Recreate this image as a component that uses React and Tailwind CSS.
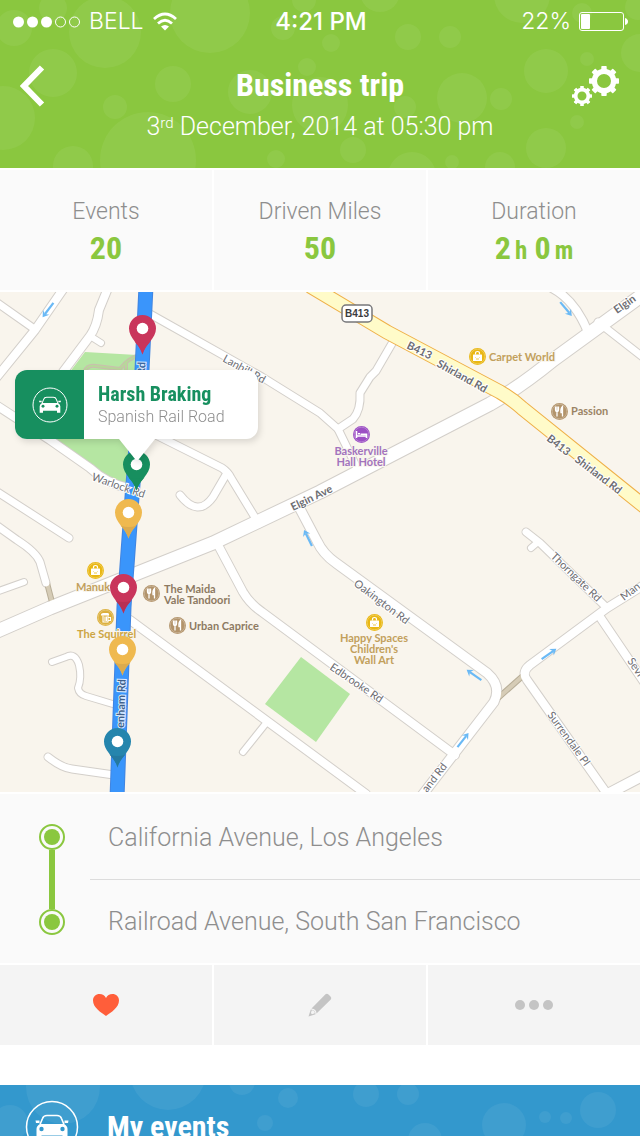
import React from 'react';

const CONDENSED = "font-['Roboto_Condensed','Liberation_Sans_Narrow','Roboto',sans-serif] font-bold";

const HEADER_BUBBLES = [
  [14, 28, 18], [53, 8, 14], [105, 32, 36], [210, 13, 40], [53, 73, 24], [3, 118, 32],
  [115, 107, 12], [173, 84, 18], [148, 160, 48], [73, 166, 20], [250, 92, 22], [276, 159, 9],
  [307, 67, 9], [283, 28, 12], [320, 105, 28], [304, 0, 12], [380, -8, 20], [408, 37, 13],
  [450, 37, 11], [331, 43, 9], [522, -5, 28], [546, 71, 22], [462, 98, 25], [501, 99, 11],
  [405, 107, 11], [353, 150, 13], [412, 176, 24], [452, 162, 7], [500, 167, 15], [546, 148, 20],
  [577, 122, 7], [587, 59, 7], [640, 53, 19], [638, 7, 13], [582, 13, 10]
];

const EVENT_BUBBLES = [
  [63, 2, 37], [168, -13, 38], [242, -3, 13], [288, 13, 10], [265, 38, 8], [10, 38, 18],
  [366, 9, 13], [408, 9, 11], [504, 40, 22], [598, 25, 18], [545, 32, 6], [566, 33, 6], [425, 55, 17]
];

// Side streets: [path, width]
const STREETS = [
  ['M64 288 L35 330 L-4 378', 8],
  ['M-4 302 L33 328', 7],
  ['M108 288 L99 310 Q97 326 90 336 L63 372', 8],
  ['M90 336 L101 343', 6],
  ['M-4 405 L50 440 L90 468 Q106 483 128 488', 8],
  ['M150 314 L262 377 L320 413 L338 429 L358 470', 7],
  ['M394 340 L376 371 L370 377 L360 393 Q361 410 353 419 L338 429', 7],
  ['M140 428 L160 437 L222 468 Q228 472 231 478 L259 524', 7],
  ['M227 473 L213 497 Q198 518 180 495', 7],
  ['M552 288 Q575 300 588 332', 8],
  ['M598 322 L644 358', 7],
  ['M-4 491 L69 538', 7],
  ['M-4 525 L17 540 Q36 552 40 562 L46 583', 7],
  ['M-4 592 L24 582', 6],
  ['M52 662 L66 657 Q75 652 79 665 Q82 678 78 688 Q79 694 86 696 L116 705', 6],
  ['M48 757 Q62 768 72 769 L114 775', 7],
  ['M130 620 L366 794', 8],
  ['M267 722 L243 752', 6],
  ['M218 545 L243 592 Q250 604 262 612 L455 755', 8],
  ['M299 507 L317 541 Q323 554 336 563 L487 673 Q502 686 494 702 L420 798', 9],
  ['M644 585 L607 608 L530 665 Q521 672 527 680 L610 798', 8],
  ['M600 617 L644 682', 8],
  ['M526 532 L540 543 L607 608', 7],
  ['M538 542 L531 548', 6],
  ['M604 796 L644 775', 10]
];

const ELGIN = 'M-5 632 L50 608 L213 543 L320 492 L490 404 Q520 387 553 360 L645 293';
const SHIRLAND = 'M310 286 L387 332 L500 392 Q512 399 522 408 L645 507';
const ROUTE = 'M146 286 L142 370 L132 497 L124 607 L117 798';

// [label, x, y, angle, weight]
const ROAD_LABELS = [
  ['Lanhill Rd', 222, 361, 29, 400],
  ['Warlock Rd', 91, 480, 19, 400],
  ['Elgin Ave', 293, 511, -26, 700],
  ['Elgin', 617, 314, -35, 700],
  ['B413', 406, 348, 26, 700],
  ['Shirland Rd', 436, 366, 29, 700],
  ['B413', 546, 440, 38, 700],
  ['Shirland Rd', 574, 461, 37, 700],
  ['Oakington Rd', 353, 585, 37, 400],
  ['Edbrooke Rd', 329, 669, 34, 400],
  ['Thorngate Rd', 550, 557, 44, 400],
  ['Surrendale Pl', 547, 715, 54, 400],
  ['Sevi', 627, 661, 56, 400],
  ['Man', 624, 601, -38, 400],
  ['and Rd', 427, 793, -52, 400]
];

const ONE_WAYS = [[53, 305, 127], [571, 304, 50], [313, 533, 244], [479, 670, 215], [468, 735, -52], [554, 649, -35]];

const PINS = [
  [142, 328, '#c9355b', '#c9355b'],
  [136, 464, '#178f5f', '#178f5f'],
  [128, 512, '#efb94f', '#dcab4e'],
  [123, 587, '#c9355b', '#b83054'],
  [122, 649, '#efb94f', '#dcab4e'],
  [117, 741, '#2585ad', '#2479a0']
];

const Bubbles = ({ items, height }) => (
  <svg
    className="absolute inset-0 w-full h-full"
    viewBox={`0 0 640 ${height}`}
    preserveAspectRatio="xMidYMin slice"
    aria-hidden="true"
  >
    {items.map(([x, y, r], idx) => (
      <circle key={idx} cx={x} cy={y} r={r} fill="#fff" fillOpacity="0.06" />
    ))}
  </svg>
);

const Gear = ({ x, y, r, hole }) => (
  <g transform={`translate(${x} ${y})`}>
    <circle r={(r * 0.82 + hole) / 2} fill="none" stroke="#fff" strokeWidth={r * 0.82 - hole} />
    {[0, 45, 90, 135, 180, 225, 270, 315].map((a) => (
      <rect key={a} x={-r * 0.18} y={-r} width={r * 0.36} height={r * 0.3} rx={r * 0.05} fill="#fff" transform={`rotate(${a})`} />
    ))}
  </g>
);

const CarBadge = ({ size, hole }) => (
  <svg width={size} height={size} viewBox="0 0 54 54" fill="none" aria-hidden="true" className="shrink-0">
    <circle cx="27" cy="27" r="25.5" stroke="#fff" strokeWidth="1.5" />
    <path d="M15 24.500 L17.500 18.500 Q18.500 15.500 22 15.500 H32 Q35.500 15.500 36.500 18.500 L39 24.500" stroke="#fff" strokeWidth="1.600" />
    <path d="M10.500 20.500 h4 v2.500 h-3.500 z M39.500 20.500 h4 l-.5 2.500 h-3.500 z" fill="#fff" />
    <path d="M15 24 H39 Q42.500 26 42.500 29 V38.500 H37.500 V35.500 H16.500 V38.500 H11.500 V29 Q11.500 26 15 24 Z" fill="#fff" />
    <circle cx="16.500" cy="29" r="2.200" fill={hole} />
    <circle cx="37.500" cy="29" r="2.200" fill={hole} />
  </svg>
);

const StatusBar = () => (
  <div className="relative grid grid-cols-3 items-center h-[43px] pl-[13px] pr-[11px] text-[23px] leading-none font-['Inter','Liberation_Sans',sans-serif]">
    <div className="flex items-center font-light">
      <svg width="68" height="14" viewBox="0 0 68 14" aria-hidden="true">
        {[5.500, 19.500, 33.500].map((x) => <circle key={x} cx={x} cy="7" r="5.500" fill="#fff" />)}
        {[47.500, 61.500].map((x) => <circle key={x} cx={x} cy="7" r="5" fill="none" stroke="#fff" />)}
      </svg>
      <span className="ml-2">BELL</span>
      <svg className="ml-2" width="26" height="20" viewBox="0 0 26 20" fill="none" stroke="#fff" strokeWidth="2.800" aria-hidden="true">
        <path d="M2 7 Q13 -3 24 7" />
        <path d="M6 11.500 Q13 5 20 11.500" />
        <path d="M9 14.500 Q13 11.500 17 14.500 L13 18.500 Z" fill="#fff" stroke="none" />
      </svg>
    </div>
    <span className="text-center text-[24px] font-medium">4:21 PM</span>
    <div className="flex items-center justify-end gap-2 font-light">
      <span>22%</span>
      <svg width="50" height="20" viewBox="0 0 50 20" aria-hidden="true">
        <rect x="0.500" y="0.500" width="44" height="18" rx="2.500" fill="none" stroke="#fff" />
        <rect x="2" y="2" width="9" height="15" rx="1" fill="#fff" />
        <path d="M46 6 Q49 7 49 9.500 Q49 12 46 13 Z" fill="#fff" />
      </svg>
    </div>
  </div>
);

const Header = () => (
  <header className="relative overflow-hidden bg-[#8ac73f] text-white h-[168px]">
    <Bubbles items={HEADER_BUBBLES} height={168} />
    <StatusBar />
    <div className="relative flex items-start justify-between px-5">
      <a href="#trips" aria-label="Back" className="w-[50px] pt-[22px]">
        <svg width="26" height="42" viewBox="0 0 26 42" fill="none" stroke="#fff" strokeWidth="6" aria-hidden="true">
          <path d="M22 2.500 L4 21 L22 39.500" />
        </svg>
      </a>
      <div className="text-center pt-[21px]">
        <h1 className={`${CONDENSED} text-[32px] leading-[42px]`}>Business trip</h1>
        <p className="text-[25px] leading-[42px] font-light">
          3<sup className="text-[15px] leading-none">rd</sup> December, 2014 at 05:30 pm
        </p>
      </div>
      <button type="button" aria-label="Settings" className="w-[50px] pt-[22px]">
        <svg width="50" height="44" viewBox="0 0 50 44" aria-hidden="true">
          <Gear x={34} y={16} r={15} hole={7} />
          <Gear x={12} y={31} r={10} hole={4.500} />
        </svg>
      </button>
    </div>
  </header>
);

const Stat = ({ label, children }) => (
  <div className="bg-[#fafafa] h-[120px] pt-[27px] text-center">
    <dt className="text-[23px] leading-[30px] font-light text-[#8e8e8e]">{label}</dt>
    <dd className={`${CONDENSED} text-[32px] leading-[42px] text-[#8ac73f]`}>{children}</dd>
  </div>
);

const PoiIcon = ({ x, y, kind }) => {
  const colors = { shop: '#e9b713', food: '#b3946b', pub: '#dcb03c', hotel: '#9c4fc4' };
  return (
    <g transform={`translate(${x + 0.5} ${y + 0.5})`}>
      <circle r="8.500" fill={colors[kind]} />
      <circle r="7.300" fill="none" stroke="#fff" strokeOpacity="0.25" />
      {kind === 'shop' && (
        <>
          <rect x="-4.500" y="-2" width="9" height="6.500" rx="0.500" fill="#fff" />
          <path d="M-2 -2 V-3 Q-2 -5 0 -5 Q2 -5 2 -3 V-2" fill="none" stroke="#fff" strokeWidth="1.200" />
          <path d="M-2 .5 V1 M2 .5 V1 M-1.500 2.500 H1.500" stroke="#e9b713" strokeWidth="0.800" />
        </>
      )}
      {kind === 'food' && (
        <path d="M-4 -5 V-2 Q-4 0 -2.500 0 Q-1 0 -1 -2 V-5 M-2.500 -5 V5 M3 5 V-5 Q1 -3 1.500 1 H3" fill="none" stroke="#fff" strokeWidth="1.300" />
      )}
      {kind === 'pub' && (
        <>
          <path d="M-4.500 -2 Q-5 -4.500 -2 -4.500 H2 Q4 -4.500 3.500 -2 Z" fill="#fff" />
          <path d="M-2.500 -2 V4.500 H2.500 V-2 M-.5 -1 V3.500 M1 -1 V3.500 M3 0 H5 V3 H3" fill="none" stroke="#fff" strokeWidth="1.100" />
        </>
      )}
      {kind === 'hotel' && (
        <path d="M-5 -3.500 V3.500 M-5 1.500 H5 V3.500 M-3.500 -.8 H-1.500 M-1 -.3 H5 V1" fill="none" stroke="#fff" strokeWidth="1.600" />
      )}
    </g>
  );
};

const PoiLabel = ({ x, y, lines, color, anchor = 'start' }) => (
  <text x={x} y={y} fill={color} textAnchor={anchor} fontSize="11" fontWeight="700" stroke="#f9f5ed" strokeWidth="2" paintOrder="stroke">
    {lines.map((line, idx) => (
      <tspan key={line} x={x} dy={idx === 0 ? 0 : 11}>{line}</tspan>
    ))}
  </text>
);

const Pin = ({ x, y, color, shade }) => (
  <g transform={`translate(${x + 0.5} ${y + 0.5})`}>
    <path d="M0 26 C-3 15 -13.500 10 -13.500 0 A13.500 13.500 0 0 1 13.500 0 C13.500 10 3 15 0 26 Z" fill={color} />
    <path d="M0 26 C-1.500 20 -5 16.500 -8 13 Q0 16 8 13 C5 16.500 1.500 20 0 26 Z" fill={shade} />
    <circle r="5.800" fill="#fff" />
  </g>
);

const TripMap = () => (
  <section className="relative overflow-hidden bg-[#f9f5ed]" aria-label="Trip map">
    <svg
      className="block w-full h-[500px] font-['Lato','Open_Sans',sans-serif]"
      viewBox="0 292 640 500"
      preserveAspectRatio="xMinYMin slice"
    >
      {/* Parks */}
      <path d="M85 352 L137 355 L133 488 Q115 487 100 476 L52 441 L60 385 Z" fill="#b5e6a2" />
      <path d="M301 657 L350 694 L316 742 L265 704 Z" fill="#b5e6a2" />
      <path d="M84 374 Q86 364 96 366 L120 369 Q128 358 140 355 M126 361 V374" fill="none" stroke="#c9bfae" strokeWidth="4" />
      <path d="M84 374 Q86 364 96 366 L120 369 Q128 358 140 355 M126 361 V374" fill="none" stroke="#b8d79a" strokeWidth="2" />

      {/* Streets: casing first, then the white fill */}
      <g fill="none" stroke="#d3cfca" strokeLinecap="round" strokeLinejoin="round">
        {STREETS.map(([d, w]) => <path key={d} d={d} strokeWidth={w + 2} />)}
        <path d={ELGIN} strokeWidth="15" />
      </g>
      <path d="M47 583 L53 606 M498 698 L525 674" fill="none" stroke="#b8ae98" strokeWidth="6" />
      <path d="M47 583 L53 606 M498 698 L525 674" fill="none" stroke="#d6ccb6" strokeWidth="4" />
      <g fill="none" stroke="#fff" strokeLinecap="round" strokeLinejoin="round">
        {STREETS.map(([d, w]) => <path key={d} d={d} strokeWidth={w} />)}
        <path d={ELGIN} strokeWidth="13" />
      </g>
      <path d={SHIRLAND} fill="none" stroke="#efb048" strokeWidth="15" />
      <path d={SHIRLAND} fill="none" stroke="#fffbc9" strokeWidth="13" />
      <path d={ROUTE} fill="none" stroke="#4285e0" strokeWidth="15" />
      <path d={ROUTE} fill="none" stroke="#3a95fb" strokeWidth="13" />

      {ONE_WAYS.map(([x, y, a]) => (
        <g key={`${x}-${y}`} transform={`translate(${x - 5} ${y + 5}) rotate(${a})`}>
          <path d="M-9 0 H5" stroke="#6ab9f5" strokeWidth="2.200" />
          <path d="M3 -4 L9 0 L3 4 L5 0 Z" fill="#6ab9f5" />
        </g>
      ))}

      {ROAD_LABELS.map(([label, x, y, a, weight]) => (
        <text
          key={`${label}-${x}`}
          transform={`translate(${x} ${y}) rotate(${a})`}
          fontSize="11"
          fontWeight={weight}
          fill="#6d6d72"
          stroke="#fff"
          strokeWidth="2"
          paintOrder="stroke"
        >
          {label}
        </text>
      ))}
      <text transform="translate(145 375) rotate(-88)" fontSize="11" fontWeight="700" fill="#3a66a0" stroke="#dcebff" strokeWidth="2" paintOrder="stroke">Rd</text>
      <text transform="translate(124 728) rotate(-88)" fontSize="11" fontWeight="700" fill="#3f5f8c" stroke="#dcebff" strokeWidth="2" paintOrder="stroke">enham Rd</text>

      <rect x="342" y="305" width="30" height="17" rx="4" fill="#fff" stroke="#77777a" strokeWidth="1.500" />
      <text x="357" y="317" textAnchor="middle" fontSize="10" fontWeight="700" fill="#3c3c40" className="font-['Liberation_Sans',sans-serif]">B413</text>

      <PoiIcon x={477} y={356} kind="shop" />
      <PoiLabel x={489} y={361} lines={['Carpet World']} color="#c2a05c" />
      <PoiIcon x={559} y={411} kind="food" />
      <PoiLabel x={571} y={415} lines={['Passion']} color="#9b8465" />
      <PoiIcon x={361} y={434} kind="hotel" />
      <PoiLabel x={361} y={455} lines={['Baskerville', 'Hall Hotel']} color="#a273bd" anchor="middle" />
      <PoiIcon x={95} y={570} kind="shop" />
      <PoiLabel x={76} y={591} lines={['Manuk']} color="#c2a05c" />
      <PoiIcon x={151} y={593} kind="food" />
      <PoiLabel x={164} y={593} lines={['The Maida', 'Vale Tandoori']} color="#8d7a62" />
      <PoiIcon x={105} y={617} kind="pub" />
      <PoiLabel x={77} y={638} lines={['The Squirrel']} color="#cda543" />
      <PoiIcon x={177} y={625} kind="food" />
      <PoiLabel x={189} y={630} lines={['Urban Caprice']} color="#8d7a62" />
      <PoiIcon x={374} y={622} kind="shop" />
      <PoiLabel x={374} y={642} lines={['Happy Spaces', "Children's", 'Wall Art']} color="#c2a05c" anchor="middle" />

      {PINS.map(([x, y, color, shade]) => (
        <Pin key={`${x}-${y}`} x={x} y={y} color={color} shade={shade} />
      ))}
    </svg>

    {/* Callout of the selected pin */}
    <div className="absolute left-[15px] top-[78px] drop-shadow-[2px_3px_3px_rgba(0,0,0,0.12)]">
      <div className="flex h-[69px] w-[243px] overflow-hidden rounded-xl bg-white">
        <div className="flex w-[69px] items-center justify-center bg-[#178f5f]">
          <CarBadge size={36} hole="#178f5f" />
        </div>
        <div className="pl-[14px] pt-[11px]">
          <p className={`${CONDENSED} text-[20px] leading-[26px] text-[#178f5f]`}>Harsh Braking</p>
          <p className="text-[16px] leading-[20px] font-light text-[#8e8e8e]">Spanish Rail Road</p>
        </div>
      </div>
      <svg className="ml-[104px] block" width="36" height="24" viewBox="0 0 36 24" aria-hidden="true">
        <path d="M0 0 H36 L20 20 Q18 22 16 20 Z" fill="#fff" />
      </svg>
    </div>
  </section>
);

const StopDot = () => (
  <span className="flex size-[26px] items-center justify-center rounded-full border-2 border-[#8ac73f]">
    <span className="size-4 rounded-full bg-[#8ac73f]" />
  </span>
);

const Stops = () => (
  <section className="flex bg-[#fafafa] h-[169px]">
    <div className="flex w-[90px] flex-col items-center pl-[14px] pt-[30px] pb-[28px]">
      <StopDot />
      <span className="w-[6px] flex-1 bg-[#8ac73f]" />
      <StopDot />
    </div>
    <ul className="flex flex-1 flex-col pt-0.5 text-[25px] font-light text-[#8e8e8e]">
      <li className="flex flex-1 items-center pl-[18px]">California Avenue, Los Angeles</li>
      <li className="flex flex-1 items-center border-t border-[#dcdcdc] pl-[18px]">Railroad Avenue, South San Francisco</li>
    </ul>
  </section>
);

const Actions = () => (
  <div className="grid grid-cols-3 gap-0.5">
    <button type="button" aria-label="Favourite" className="flex h-20 items-center justify-center bg-[#f4f4f4]">
      <svg width="28" height="24" viewBox="0 0 28 24" aria-hidden="true">
        <path d="M14 23 C9 19.500 1 14.500 1 7.500 C1 3.500 4 1 7.500 1 C10.500 1 12.800 2.500 14 5 C15.200 2.500 17.500 1 20.500 1 C24 1 27 3.500 27 7.500 C27 14.500 19 19.500 14 23 Z" fill="#ff5e3a" />
      </svg>
    </button>
    <button type="button" aria-label="Edit" className="flex h-20 items-center justify-center bg-[#f4f4f4]">
      <svg width="24" height="24" viewBox="0 0 24 24" aria-hidden="true">
        <path d="M17.500 1.200 Q19 0 20.500 1.500 L22.500 3.500 Q24 5 22.800 6.500 L8.500 20.500 Q8.500 16 3.500 15.500 Z" fill="#c4c4c4" />
        <path d="M2.800 16.500 L.5 23.500 L7.500 21.200 Q7.500 17 2.800 16.500 Z" fill="#c4c4c4" />
        <path d="M3.800 17.200 Q6.800 17.500 6.800 20.300 L4 21.200 L2.800 20 Z" fill="#f4f4f4" />
      </svg>
    </button>
    <button type="button" aria-label="More" className="flex h-20 items-center justify-center gap-1 bg-[#f4f4f4]">
      <span className="size-[10px] rounded-full bg-[#c4c4c4]" />
      <span className="size-[10px] rounded-full bg-[#c4c4c4]" />
      <span className="size-[10px] rounded-full bg-[#c4c4c4]" />
    </button>
  </div>
);

const App = () => {
  return (
    <main className="flex flex-col gap-0.5 bg-white font-['Roboto','Liberation_Sans',sans-serif]">
      <Header />
      <dl className="grid grid-cols-3 gap-0.5">
        <Stat label="Events">20</Stat>
        <Stat label="Driven Miles">50</Stat>
        <Stat label="Duration">
          2<span className="ml-1 text-[25px]">h</span> 0<span className="ml-1 text-[25px]">m</span>
        </Stat>
      </dl>
      <TripMap />
      <Stops />
      <Actions />
      <section className="relative mt-[38px] flex items-center gap-[28px] overflow-hidden bg-[#3398cd] h-[84px] pl-[25px] text-white">
        <Bubbles items={EVENT_BUBBLES} height={84} />
        <span className="relative"><CarBadge size={54} hole="#3398cd" /></span>
        <h2 className={`${CONDENSED} relative text-[30px] leading-[40px]`}>My events</h2>
      </section>
    </main>
  );
};

export default App;
